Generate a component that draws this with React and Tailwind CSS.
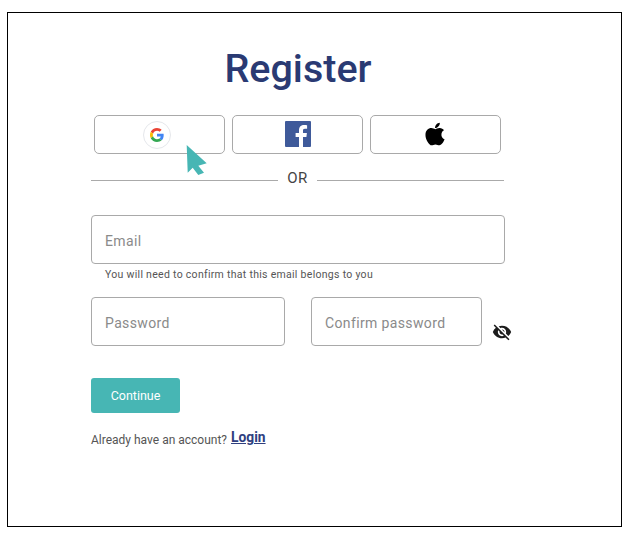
import React from 'react'
import { FaApple } from 'react-icons/fa'
import { MdVisibilityOff } from 'react-icons/md'

const GoogleIcon = () => (
    <span className="mr-[5px] flex h-[28px] w-[28px] items-center justify-center rounded-full border border-gray-200 bg-white">
        <svg width="14" height="14" viewBox="0 0 48 48">
            <path fill="#EA4335" d="M24 9.5c3.5 0 6.7 1.2 9.1 3.6l6.8-6.8C35.8 2.5 30.3 0 24 0 14.6 0 6.5 5.4 2.6 13.2l7.9 6.2C12.4 13.6 17.7 9.5 24 9.5z" />
            <path fill="#4285F4" d="M46.9 24.5c0-1.6-.1-3.1-.4-4.5H24v9h12.9c-.6 3-2.2 5.5-4.7 7.2l7.7 6c4.5-4.2 7-10.3 7-17.7z" />
            <path fill="#FBBC05" d="M10.5 28.6c-.5-1.4-.8-3-.8-4.6s.3-3.2.8-4.6l-7.9-6.2C.9 16.5 0 20.1 0 24s.9 7.5 2.6 10.8l7.9-6.2z" />
            <path fill="#34A853" d="M24 48c6.5 0 11.9-2.1 15.9-5.8l-7.7-6c-2.1 1.4-4.9 2.3-8.2 2.3-6.3 0-11.6-4.1-13.5-9.9l-7.9 6.2C6.5 42.6 14.6 48 24 48z" />
        </svg>
    </span>
)

const FacebookIcon = () => (
    <svg className="mb-[1px]" width="26" height="26" viewBox="0 0 26 26">
        <rect width="26" height="26" rx="1" fill="#3f5a9a" />
        <path fill="#fff" d="M18 26V16h3.4l.5-4H18V9.600c0-1.200.3-1.900 2-1.900h2.100V4.200c-.4 0-1.600-.2-3-.2-3 0-5.100 1.800-5.100 5.200V12h-3.400v4H14v10z" />
    </svg>
)

const SocialButton = ({ children }) => (
    <button className="flex h-[39px] w-[131px] items-center justify-center rounded-[5px] border border-[#a9a9a9] bg-white">
        {children}
    </button>
)

const Field = ({ placeholder, className }) => (
    <input
        placeholder={placeholder}
        className={`h-[49px] rounded-[4px] border border-[#a9a9a9] bg-white px-[13px] pt-[2px] text-[14px] tracking-[0.37px] outline-none placeholder:text-[#8a8a8a] ${className}`}
    />
)

const App = () => {
    return (
        <div className="h-[538px] w-[630px] bg-white pl-[7px] pt-[12px] font-['Roboto',sans-serif]">
            <div className="relative h-[515px] w-[615px] border border-black pl-[83px] pt-[32px]">
                <h1 className="w-[414px] text-center text-[39.5px] font-medium leading-[47px] text-[#2a3a73]">Register</h1>

                <div className="mt-[23px] flex gap-[7px] pl-[3px]">
                    <SocialButton><GoogleIcon /></SocialButton>
                    <SocialButton><FacebookIcon /></SocialButton>
                    <SocialButton><FaApple className="mb-[2px] mr-[2px] h-[26px] w-[26px] text-black" /></SocialButton>
                </div>

                <div className="mt-[14px] flex w-[413px] items-center gap-[9px]">
                    <div className="mt-[4px] h-px flex-1 bg-[#aaaaaa]" />
                    <span className="text-[15px] leading-[20px] tracking-[0.4px] text-[#444444]">OR</span>
                    <div className="mt-[4px] h-px flex-1 bg-[#aaaaaa]" />
                </div>

                <Field placeholder="Email" className="mt-[27px] block w-[414px]" />
                <p className="mt-[4px] pl-[14px] text-[10.5px] leading-[13px] tracking-[0.29px] text-[#555555]">
                    You will need to confirm that this email belongs to you
                </p>

                <div className="mt-[16px] flex items-start">
                    <Field placeholder="Password" className="w-[194px]" />
                    <Field placeholder="Confirm password" className="ml-[26px] w-[171px]" />
                    <MdVisibilityOff className="ml-[10px] mt-[25px] h-[20px] w-[20px] text-[#1c1c1c]" />
                </div>

                <button className="mt-[32px] block h-[35px] w-[89px] rounded-[3px] bg-[#47b6b4] pt-[2px] text-[12.5px] font-normal text-white">
                    Continue
                </button>

                <p className="mt-[16px] text-[12px] leading-[20px] text-[#555555]">
                    Already have an account?{' '}
                    <a href="#" className="relative -top-[2px] ml-[1px] text-[13.8px] font-bold text-[#2f3f7f] underline">Login</a>
                </p>

                {/* cursor sits over the google button */}
                <svg className="absolute left-[178px] top-[131px]" width="22" height="33" viewBox="0 0 22 33">
                    <path fill="#47b6b4" d="M.7 1l20 18.300-8.400 2.400 5.700 7-5.700 2.300-5.600-7.300-5 5z" />
                </svg>
            </div>
        </div>
    )
}

export default App
